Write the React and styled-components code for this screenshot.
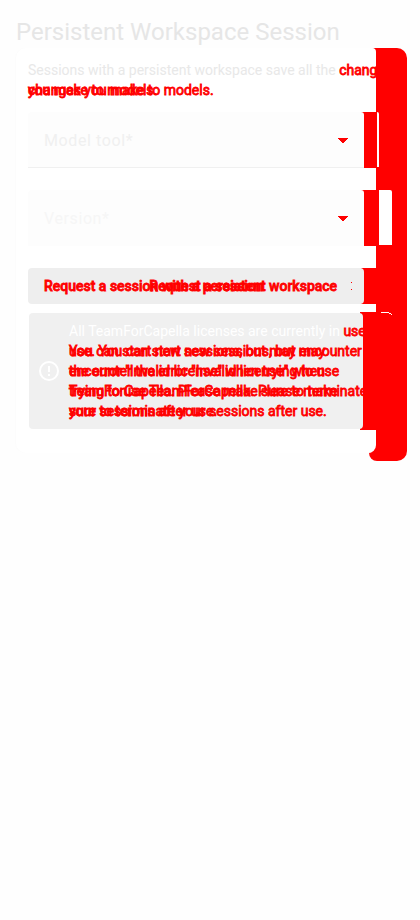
import React from "react";
import styled, { createGlobalStyle } from "styled-components";

const GlobalStyle = createGlobalStyle`
  * { box-sizing: border-box; }
  body { margin: 0; background: #fefefe; font-family: Roboto, "Liberation Sans", sans-serif; }
`;

const Page = styled.main`
  height: 920px;
  padding: 16px 13px 0 16px;
  overflow: hidden;
`;
const Title = styled.h1`
  margin: 0;
  font-size: 24px;
  line-height: 32px;
  font-weight: 400;
  color: #e6e6e6;
  white-space: nowrap;
`;
const Panel = styled.section`
  display: grid;
  grid-template-columns: 391px;
  height: 413px;
`;
const ChangedEdge = styled.div`
  grid-area: 1 / 1;
  justify-self: end;
  width: 38px;
  height: 413px;
  border-radius: 0 10px 10px 8px;
  background: #f00;
`;
const Card = styled.div`
  grid-area: 1 / 1;
  z-index: 1;
  display: flex;
  flex-direction: column;
  width: 360px;
  height: 405px;
  padding: 12px 12px 0;
  background: #fff;
  border-radius: 10px 4px 8px 10px;
  box-shadow: -1px 0 1px #fcfcfc;
`;
const Overlay = styled.div`
  display: grid;
  ${(p) => p.$intro && "height: 40px; margin-bottom: 12px;"}
`;
const Copy = styled.p`
  grid-area: 1 / 1;
  align-self: end;
  margin: 0;
  font-size: 14px;
  line-height: 20px;
  font-weight: ${(p) => (p.$medium ? 500 : 400)};
  text-align: ${(p) => (p.$center ? "center" : "left")};
  color: #f00;
  -webkit-text-stroke: 0.8px #f00;
  white-space: nowrap;
`;
const Faded = styled.span`
  color: ${(p) => p.$color};
  -webkit-text-stroke: 0;
`;
const Row = styled.div`
  display: flex;
  align-items: flex-start;
  width: 364px;
  height: ${(p) => p.$h}px;
  margin-bottom: ${(p) => p.$gap}px;
`;
const ChangedGap = styled.div`
  flex: none;
  width: ${(p) => p.$w}px;
  height: 100%;
  margin-left: -3px;
  background: #f00;
`;
const Slot = styled.div`
  flex: none;
  width: ${(p) => p.$w}px;
  height: 55px;
  border-top-right-radius: 2px;
  background: #fff;
`;
const Field = styled.div`
  flex: none;
  z-index: 1;
  display: flex;
  align-items: center;
  justify-content: space-between;
  width: 336px;
  height: 56px;
  padding: 1px 16px 0;
  font-size: 16px;
  letter-spacing: 0.6px;
  color: ${(p) => p.$color};
  background: #fdfdfd;
  border-radius: 4px 3px 0 0;
  box-shadow: inset 0 -1px ${(p) => p.$line};
`;
const Button = styled.div`
  flex: none;
  z-index: 1;
  display: grid;
  grid-template-columns: 364px;
  align-items: center;
  width: 336px;
  height: 36px;
  border-radius: 4px;
  background: #eee;
`;
const ButtonLabel = styled(Copy)`
  align-self: center;
  padding: ${(p) => (p.$center ? "0 7px 0 0" : "0 0 0 16px")};
`;
const Dots = styled.span`
  grid-area: 1 / 1;
  justify-self: start;
  width: 1px;
  height: 8px;
  margin-left: 323px;
  border: solid #f00;
  border-width: 1px 0;
`;
const Alert = styled.div`
  flex: none;
  z-index: 1;
  display: flex;
  align-items: center;
  gap: 8px;
  width: 334px;
  height: 116px;
  margin: 1px 0 0 1px;
  padding-left: 8px;
  border-radius: 4px;
  background: #f0f0f0;
`;
const AlertIcon = styled.svg`
  flex: none;
`;
const Crescent = styled.svg`
  flex: none;
  z-index: 1;
  margin-left: 5px;
`;

function Arrow() {
  return (
    <svg width="10" height="5" viewBox="0 0 10 5" shapeRendering="crispEdges">
      <path d="M0 0h10v1h-1v1h-1v1h-1v1h-1v1h-2v-1h-1v-1h-1v-1h-1v-1h-1z" fill="#f00" />
    </svg>
  );
}

export default function App() {
  return (
    <Page>
      <GlobalStyle />
      <Title>Persistent Workspace Session</Title>
      <Panel>
        <ChangedEdge />
        <Card>
          <Overlay $intro>
            <Copy>
              <Faded $color="#e8e8e8">Sessions with a persistent workspace save all the </Faded>
              changes<br />you make to models.
            </Copy>
            <Copy>changes you make to models.</Copy>
          </Overlay>
          <Row $h={56} $gap={22}>
            <Field $color="#f0f0f0" $line="#f0f0f0">Model tool*<Arrow /></Field>
            <ChangedGap $w={16} />
            <Slot $w={2} />
          </Row>
          <Row $h={56} $gap={22}>
            <Field $color="#f6f6f6" $line="#fdfdfd">Version*<Arrow /></Field>
            <ChangedGap $w={18} />
            <Slot $w={13} />
          </Row>
          <Row $h={36} $gap={8}>
            <Button>
              <ButtonLabel $medium>Request a session with a persistent workspace</ButtonLabel>
              <ButtonLabel $medium $center>Request a session</ButtonLabel>
              <Dots />
            </Button>
            <ChangedGap $w={16} />
          </Row>
          <Row $h={118} $gap={0}>
            <Alert>
              <AlertIcon width="24" height="24" viewBox="0 0 24 24" fill="#fff">
                <path d="M11 15h2v2h-2zm0-8h2v6h-2zm1-5a10 10 0 1 0 0 20 10 10 0 0 0 0-20zm0 18a8 8 0 1 1 0-16 8 8 0 0 1 0 16z" />
              </AlertIcon>
              <Overlay>
                <Copy>
                  <Faded $color="#fff">All TeamForCapella licenses are currently in </Faded>
                  use.<br />
                  You can start new sessions, but may encounter<br />
                  the error "Invalid license" when trying to use<br />
                  TeamForCapella. Please make sure to terminate<br />
                  your sessions after use.
                </Copy>
                <Copy>
                  use. You can start new sessions, but may<br />
                  encounter the error "Invalid license" when<br />
                  trying to use TeamForCapella. Please make<br />
                  sure to terminate your sessions after use.
                </Copy>
              </Overlay>
            </Alert>
            <ChangedGap $w={16} />
            <Crescent width="12" height="3" viewBox="0 0 12 3" shapeRendering="crispEdges">
              <path d="M0 0h8v1H0zM8 1h2v1H8zM10 2h1v1h-1z" fill="#fff" />
            </Crescent>
          </Row>
        </Card>
      </Panel>
    </Page>
  );
}
